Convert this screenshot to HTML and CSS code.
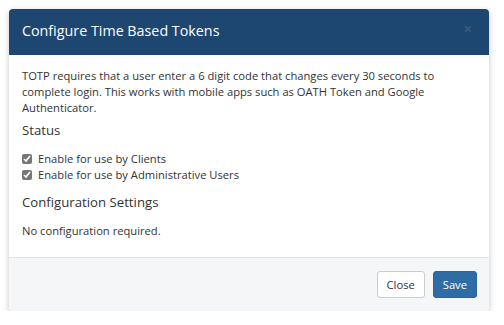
FILE: index.html
```html
<!DOCTYPE html>
<html lang="en">

<head>
    <meta charset="UTF-8">
    <meta name="viewport" content="width=device-width, initial-scale=1.0">
    <title>Configure Time Based Tokens</title>
    <link rel="stylesheet" href="styles.css">
</head>

<body>
    <div class="modal-content">
        <div class="modal-header">
            <h4 class="modal-title">Configure Time Based Tokens</h4>
            <span class="close-btn">&times;</span>
        </div>
        <div class="modal-body">
            <p>TOTP requires that a user enter a 6 digit code that changes every 30 seconds to complete login. This works with mobile apps such as OATH Token and Google Authenticator.</p>
            <h5 class="status">Status</h5>
            <label class="check"><input type="checkbox" checked> Enable for use by Clients</label>
            <label class="check"><input type="checkbox" checked> Enable for use by Administrative Users</label>
            <h5 class="settings">Configuration Settings</h5>
            <p>No configuration required.</p>
        </div>
        <div class="modal-footer">
            <button class="btn">Close</button>
            <button class="btn btn-primary">Save</button>
        </div>
    </div>
</body>

</html>
```

FILE: styles.css
```css
body {
    font-family: "Open Sans", "Liberation Sans", sans-serif;
    font-size: 11.2px;
    line-height: 15.8px;
    color: #333;
    background: #fff;
    margin: 0;
    padding: 9px 15px 0 9px;
}

/* Modal content */
.modal-content {
    width: 480px;
    background-color: #fff;
    border-radius: 4px;
    box-shadow: 0 2px 6px rgba(0, 0, 0, 0.22);
    overflow: hidden;
}

/* Modal header */
.modal-header {
    background-color: #1d4671;
    height: 46px;
    box-sizing: border-box;
    padding: 0 13px 3px;
    display: flex;
    align-items: center;
    justify-content: space-between;
}

.modal-title {
    margin: 0;
    color: #fff;
    font-size: 14.3px;
    font-weight: normal;
}

.close-btn {
    color: #3d5c7e;
    font-size: 15px;
    font-weight: bold;
    margin-top: -4px;
    margin-right: 4px;
}

/* Modal body */
.modal-body {
    padding: 13px 13px 19px;
}

.modal-body p {
    margin: 0;
}

.modal-body h5 {
    font-size: 13.2px;
    font-weight: normal;
    line-height: 18.6px;
    color: #333;
}

.modal-body h5.status {
    margin: 6px 0 11px;
}

.modal-body h5.settings {
    margin: 10px 0 11px;
}

.check {
    display: flex;
    align-items: center;
    gap: 6px;
    height: 16px;
}

.check input {
    width: 10px;
    height: 10px;
    margin: 0;
    accent-color: #767676;
}

/* Modal footer */
.modal-footer {
    background-color: #f5f6f8;
    border-top: 1px solid #e3e3e3;
    height: 54px;
    box-sizing: border-box;
    padding: 0 12px;
    display: flex;
    align-items: center;
    justify-content: flex-end;
    gap: 8px;
}

.btn {
    font-family: inherit;
    font-size: 11.2px;
    height: 27px;
    padding: 0 9px;
    border: 1px solid #ccc;
    border-radius: 3px;
    background: #fff;
    color: #333;
}

.btn-primary {
    background: #2e6ca6;
    border-color: #2a63a0;
    color: #fff;
}
```
